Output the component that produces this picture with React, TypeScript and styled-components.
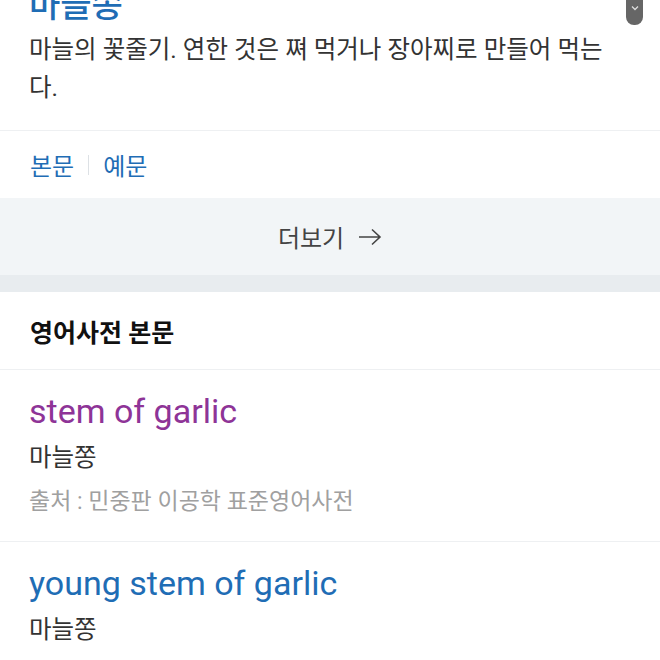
import React from 'react'
import styled, { createGlobalStyle } from 'styled-components'

const GlobalStyle = createGlobalStyle`
  html, body {
    margin: 0;
    padding: 0;
    background: #fff;
    overflow: hidden;
  }
  body {
    font-family: Roboto, "Noto Sans CJK KR", sans-serif;
    color: #333;
  }
`

const Page = styled.div`
  width: 660px;
  height: 660px;
  overflow: hidden;
  position: relative;
`

const Scroller = styled.div`
  margin-top: -15px;
`

const Section = styled.section`
  background: #fff;
`

const Entry = styled.div`
  padding: 0 29px 23px;
`

const Headword = styled.div`
  font-size: 34px;
  line-height: 40px;
  color: #1f6db5;
  font-weight: 500;
`

const Definition = styled.p`
  margin: 6px 0 0;
  font-size: 24.5px;
  line-height: 38px;
  color: #333;
`

const Divider = styled.div`
  height: 1px;
  background: #eef0f2;
`

const Tabs = styled.div`
  display: flex;
  align-items: center;
  height: 67px;
  padding: 0 30px;
`

const Tab = styled.span`
  font-size: 24px;
  color: #1f6db5;
`

const TabSep = styled.span`
  width: 1px;
  height: 20px;
  background: #dde1e5;
  margin: 0 14px;
`

const MoreBar = styled.div`
  height: 77px;
  background: #f2f5f7;
  display: flex;
  align-items: center;
  justify-content: center;
  gap: 14px;
  font-size: 24px;
  color: #444;
`

const Gap = styled.div`
  height: 17px;
  background: #e8ecef;
`

const SectionTitle = styled.div`
  height: 77px;
  display: flex;
  align-items: center;
  padding: 0 30px;
  font-size: 25px;
  font-weight: 700;
  color: #111;
`

const Result = styled.div`
  padding: 19px 29px 17px;
`

const Term = styled.div<{ $visited?: boolean }>`
  font-size: 34px;
  line-height: 44px;
  color: ${p => (p.$visited ? '#8e3497' : '#1f6db5')};
`

const Meaning = styled.div`
  margin-top: 3px;
  font-size: 24.5px;
  line-height: 44px;
  color: #333;
`

const Source = styled.div`
  font-size: 23px;
  line-height: 44px;
  color: #a0a0a0;
`

const ScrollThumb = styled.div`
  position: absolute;
  top: 0;
  right: 17px;
  width: 17px;
  height: 25px;
  background: #666;
  border-radius: 0 0 8px 8px;
  display: flex;
  justify-content: center;
  padding-top: 5px;
  box-sizing: border-box;
`

const Arrow = () => (
  <svg width="24" height="18" viewBox="0 0 24 18" fill="none" stroke="#444" strokeWidth="1.6">
    <path d="M1 9h21M14 1.5L22 9l-8 7.5" />
  </svg>
)

export default function App() {
  return (
    <Page>
      <GlobalStyle />
      <Scroller>
        <Section>
          <Entry>
            <Headword>마늘쫑</Headword>
            <Definition>마늘의 꽃줄기. 연한 것은 쪄 먹거나 장아찌로 만들어 먹는다.</Definition>
          </Entry>
          <Divider />
          <Tabs>
            <Tab>본문</Tab>
            <TabSep />
            <Tab>예문</Tab>
          </Tabs>
          <MoreBar>
            더보기 <Arrow />
          </MoreBar>
        </Section>
        <Gap />
        <Section>
          <SectionTitle>영어사전 본문</SectionTitle>
          <Divider />
          <Result>
            <Term $visited>stem of garlic</Term>
            <Meaning>마늘쫑</Meaning>
            <Source>출처 : 민중판 이공학 표준영어사전</Source>
          </Result>
          <Divider />
          <Result>
            <Term>young stem of garlic</Term>
            <Meaning>마늘쫑</Meaning>
          </Result>
        </Section>
      </Scroller>
      <ScrollThumb>
        <svg width="8" height="6" viewBox="0 0 8 6" fill="none" stroke="#ddd" strokeWidth="1.3">
          <path d="M1 1.5l3 3 3-3" />
        </svg>
      </ScrollThumb>
    </Page>
  )
}
